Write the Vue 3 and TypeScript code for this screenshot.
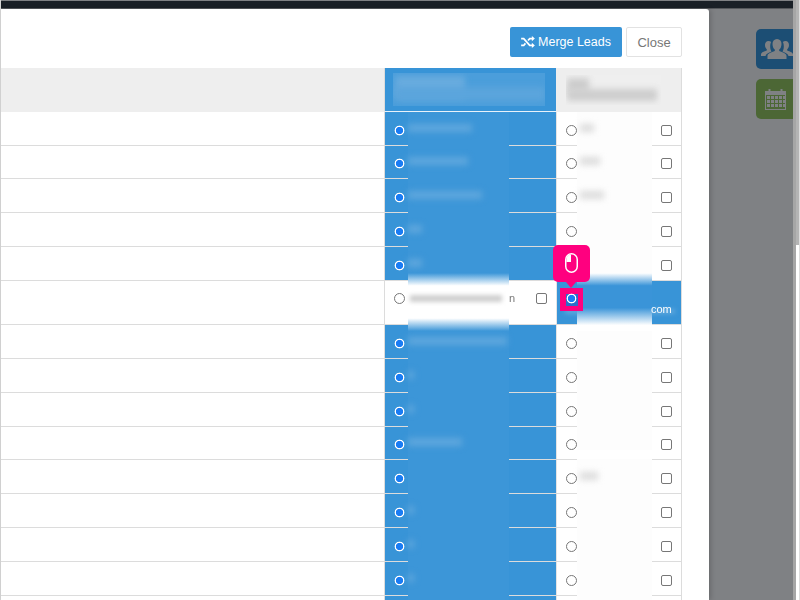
<script setup lang="ts">
const heights = [34, 33, 34, 34, 34, 44, 34, 34, 34, 33, 34, 34, 34, 34, 5];
const leftTexts = [64, 60, 74, 14, 14, 0, 99, 6, 6, 54, 0, 6, 6, 6, 0];
const rightTexts = [14, 20, 24, 0, 0, 0, 0, 0, 0, 0, 18, 0, 0, 0, 0];
const rows = heights.map((h, i) => ({
  h,
  swapped: i === 5,
  last: i === heights.length - 1,
  cut: i === 9,
  left: leftTexts[i],
  right: rightTexts[i],
}));
</script>

<template>
  <div class="page">
    <div class="main">
      <div class="topbar"></div>
      <div class="stage">
        <div class="modal">
          <div class="head">
            <button class="btn primary">
              <svg class="shuffle" viewBox="0 0 16 14" width="14" height="12">
                <path d="M0 3h3l7 8h3M0 11h3l2-2.400M8 5.300 10 3h3" fill="none" stroke="#fff" stroke-width="2" />
                <path d="M12.500 0l3.500 3-3.500 3zM12.500 8l3.500 3-3.500 3z" fill="#fff" />
              </svg>
              Merge Leads
            </button>
            <button class="btn plain">Close</button>
          </div>
          <div class="table">
            <div class="row thead">
              <div class="c0"></div>
              <div class="c1 sel">
                <span class="hbox b1"><span class="hl hl1"></span><span class="hl hl2"></span></span>
              </div>
              <div class="c2">
                <span class="hbox b2"><span class="hl hg1"></span><span class="hl hg2"></span></span>
              </div>
            </div>
            <div v-for="(r, i) in rows" :key="i" class="row" :style="{ height: r.h + 'px' }">
              <div class="c0"></div>
              <div class="c1" :class="{ sel: !r.swapped, swapped: r.swapped }">
                <span v-if="!r.last" class="radio" :class="{ on: !r.swapped }"></span>
                <span class="mask" :class="{ light: r.swapped }">
                  <span v-if="r.left" class="txt" :style="{ width: r.left + 'px' }"></span>
                  <span v-if="r.swapped" class="txt grey"></span>
                </span>
                <span v-if="r.swapped" class="tail">n</span>
                <span v-if="r.swapped" class="box"></span>
              </div>
              <div class="c2" :class="{ sel: r.swapped, swapped: r.swapped }">
                <span v-if="!r.last" class="radio" :class="{ on: r.swapped }"></span>
                <span v-if="r.swapped" class="subline"></span>
                <span class="mask" :class="{ onblue: r.swapped }">
                  <span v-if="r.right" class="txt grey" :style="{ width: r.right + 'px' }"></span>
                </span>
                <span v-if="r.swapped" class="tail2">com</span>
                <span v-if="!r.swapped && !r.last" class="box"></span>
                <span v-if="r.cut" class="cut"></span>
                <template v-if="r.swapped">
                  <span class="target"></span>
                  <span class="tip">
                    <svg viewBox="0 0 13 20" width="13" height="20">
                      <rect x="0.750" y="0.750" width="11.500" height="18.500" rx="5.750" fill="none" stroke="#fff" stroke-width="1.500" />
                      <path d="M6 1.500A4.500 4.500 0 0 0 1.500 6v3H6z" fill="#fff" />
                    </svg>
                  </span>
                </template>
              </div>
            </div>
          </div>
        </div>
        <div class="side">
          <div class="sbtn blue">
            <svg viewBox="0 0 32 22" width="32" height="22">
              <g fill="#7f8184">
                <path d="M16 1c3 0 4.500 2.200 4.500 5 0 2.600-1 4.600-2.300 5.600v1.500c3.500 1.200 7.300 2.500 7.300 5V21H6.500v-2.900c0-2.500 3.800-3.800 7.300-5v-1.500C12.500 10.600 11.500 8.600 11.500 6c0-2.800 1.500-5 4.500-5z" />
                <path d="M7.500 3c-2.300 0-3.500 1.700-3.500 4 0 2 .8 3.500 1.800 4.300v1.200C3 13.500 0 14.500 0 16.500V18h4.500c.5-2 3-3.300 6-4.500-.8-1.300-1.300-3-1.300-5 0-2 .3-3.500 1-4.500-.7-.6-1.700-1-2.700-1z" />
                <path d="M24.500 3c2.300 0 3.500 1.700 3.500 4 0 2-.8 3.500-1.800 4.300v1.200c2.800 1 5.800 2 5.800 4V18h-4.500c-.5-2-3-3.300-6-4.500.8-1.300 1.300-3 1.300-5 0-2-.3-3.500-1-4.500.7-.6 1.700-1 2.700-1z" />
              </g>
            </svg>
          </div>
          <div class="sbtn green">
            <svg viewBox="0 0 21 22" width="21" height="22">
              <path fill="#7f8184" fill-rule="evenodd" d="M0 3h3.500V1h2v2h10V1h2v2H21v19H0zM1 7v14h19V7z" />
              <g fill="#7f8184">
                <rect x="2" y="8" width="3" height="3" /><rect x="6" y="8" width="3" height="3" /><rect x="10" y="8" width="3" height="3" /><rect x="14" y="8" width="3" height="3" /><rect x="18" y="8" width="2" height="3" />
                <rect x="2" y="12" width="3" height="3" /><rect x="6" y="12" width="3" height="3" /><rect x="10" y="12" width="3" height="3" /><rect x="14" y="12" width="3" height="3" /><rect x="18" y="12" width="2" height="3" />
                <rect x="2" y="16" width="3" height="3" /><rect x="6" y="16" width="3" height="3" /><rect x="10" y="16" width="3" height="3" /><rect x="14" y="16" width="3" height="3" /><rect x="18" y="16" width="2" height="3" />
              </g>
            </svg>
          </div>
        </div>
      </div>
    </div>
    <div class="scroll"><span class="thumb"></span></div>
  </div>
</template>

<style scoped>
.page { width: 800px; height: 600px; overflow: hidden; display: flex; background: #7f8184; font-family: "Liberation Sans", Arial, sans-serif; }
.main { width: 793px; flex: none; display: flex; flex-direction: column; border-left: 1px solid #d6d6d6; box-sizing: border-box; }
.topbar { height: 9px; flex: none; background: #1a2027; border-top: 1px solid #7f8184; border-bottom: 1px solid #55585c; box-sizing: border-box; }
.stage { flex: 1; display: flex; min-height: 0; }
.modal { width: 708px; flex: none; background: #fff; border-radius: 0 3px 0 0; overflow: hidden; box-shadow: 2px 0 5px rgba(0,0,0,.18); }
.head { height: 59px; display: flex; justify-content: flex-end; align-items: flex-start; gap: 4px; padding: 18px 27px 0 0; box-sizing: border-box; }
.btn { height: 30px; border-radius: 2px; font: 13px "Liberation Sans", Arial, sans-serif; box-sizing: border-box; padding: 0; }
.primary { width: 112px; background: #3894d7; border: 0; color: #fff; display: flex; align-items: center; justify-content: center; gap: 3px; font-size: 12.5px; }
.plain { width: 56px; background: #fff; border: 1px solid #e2e2e2; color: #777; }
.table { width: 681px; box-sizing: border-box; border-right: 1px solid #dcdcdc; }
.row { display: flex; border-bottom: 1px solid #dcdcdc; box-sizing: border-box; height: 34px; }
.thead { height: 44px; border: 0; background: #eee; }
.c0 { width: 383px; flex: none; }
.c1, .c2 { position: relative; box-sizing: border-box; }
.c1 { width: 173px; flex: none; border-left: 1px solid #dcdcdc; border-right: 1px solid #e4e4e4; }
.c2 { width: 124px; flex: none; }
.sel { background: #3894d7; }
.thead .c1 { border-bottom: 1px solid #e8f2fa; border-right-color: #eee; }
.hbox { position: absolute; overflow: hidden; }
.b1 { left: 8px; top: 5px; width: 152px; height: 33px; background: #4b9edb; }
.b2 { left: 9px; top: 7px; width: 95px; height: 30px; background: #efefef; }
.hl { position: absolute; display: block; filter: blur(3px); }
.hl1 { left: 2px; top: 3px; width: 70px; height: 22px; background: #69acdf; }
.hl2 { left: 2px; top: 14px; width: 150px; height: 14px; background: #5ba5dc; }
.hg1 { left: 1px; top: 3px; width: 22px; height: 14px; background: #cdcdcd; }
.hg2 { left: 1px; top: 14px; width: 90px; height: 12px; background: #cdcdcd; }
.radio { position: absolute; left: 9px; top: calc(50% - 4px); width: 11px; height: 11px; box-sizing: border-box; border: 1px solid #777; border-radius: 50%; background: #fff; z-index: 2; }
.radio.on { border: 0; background: radial-gradient(circle, #1a7cf4 3.400px, #fff 3.900px, #fff 4.600px, transparent 5.200px); }
.mask { position: absolute; left: 23px; top: 0; bottom: -1px; width: 101px; background: #3c96d8; display: flex; flex-direction: column; justify-content: center; padding-bottom: 3px; box-sizing: border-box; }
.c1 .mask.light { top: -8px; bottom: -7px; background: linear-gradient(#3c96d8, #fff 22%, #fff 78%, #3c96d8); z-index: 1; padding-bottom: 8px; }
.c2 .mask { left: 20px; width: 75px; background: #fdfdfd; }
.c2 .mask.onblue { top: -8px; bottom: -7px; background: linear-gradient(#fff, #3a94d8 22%, #3a94d8 60%, #fff 90%); z-index: 1; }
.swapped { z-index: 3; }
.txt { display: block; height: 8px; background: #5fa7dd; filter: blur(3px); }
.c1 .mask.light .txt.grey { width: 92px; margin-left: 2px; background: #cfcfcf; height: 7px; filter: blur(2px); }
.c2 .txt.grey { background: #dcdcdc; margin-left: 3px; }
.subline { position: absolute; left: 8px; top: 28px; width: 110px; height: 5px; background: #5fa7dd; filter: blur(2px); }
.tail { position: absolute; left: 124px; top: 11px; font-size: 11px; color: #777; z-index: 1; opacity: .99; }
.tail2 { position: absolute; left: 94px; top: 22px; font-size: 11px; color: #fff; z-index: 1; opacity: .99; }
.box { position: absolute; right: 9px; top: calc(50% - 4px); width: 11px; height: 11px; box-sizing: border-box; border: 1px solid #777; border-radius: 2px; background: #fff; }
.swapped .radio, .swapped .box { top: 12px; }
.target { position: absolute; left: 3px; top: 7px; width: 23px; height: 23px; background: #ff007f; z-index: 1; display: flex; align-items: center; justify-content: center; }
.target::before { content: ""; width: 12px; height: 12px; background: #2a6fc9; }
.cut { position: absolute; left: 0; right: 0; bottom: 0; height: 9px; background: #fff; z-index: 3; }
.tip { position: absolute; left: -4px; top: -36px; width: 37px; height: 37px; background: #ff007f; border-radius: 5px; z-index: 3; display: flex; align-items: center; justify-content: center; padding-bottom: 2px; box-sizing: border-box; }
.tip::after { content: ""; position: absolute; left: 13px; bottom: -6px; border: 5px solid transparent; border-bottom: 0; border-top: 6px solid #ff007f; }
.side { flex: 1; padding: 20px 0 0 47px; display: flex; flex-direction: column; gap: 10px; overflow: hidden; min-width: 0; }
.sbtn { width: 40px; height: 40px; flex: none; border-radius: 5px 0 0 5px; display: flex; align-items: center; padding-left: 5px; box-sizing: border-box; }
.blue { background: #1c4e74; }
.green { background: #4c6735; padding-left: 9px; }
.scroll { width: 7px; flex: none; display: flex; flex-direction: column; align-items: flex-start; background: linear-gradient(90deg, #a6a6a6 3px, #fff 3px, #fff 6px, #ddd 6px); }
.thumb { width: 6px; height: 245px; background: linear-gradient(90deg, #a6a6a6 3px, #b4b4b4 3px); }
</style>
